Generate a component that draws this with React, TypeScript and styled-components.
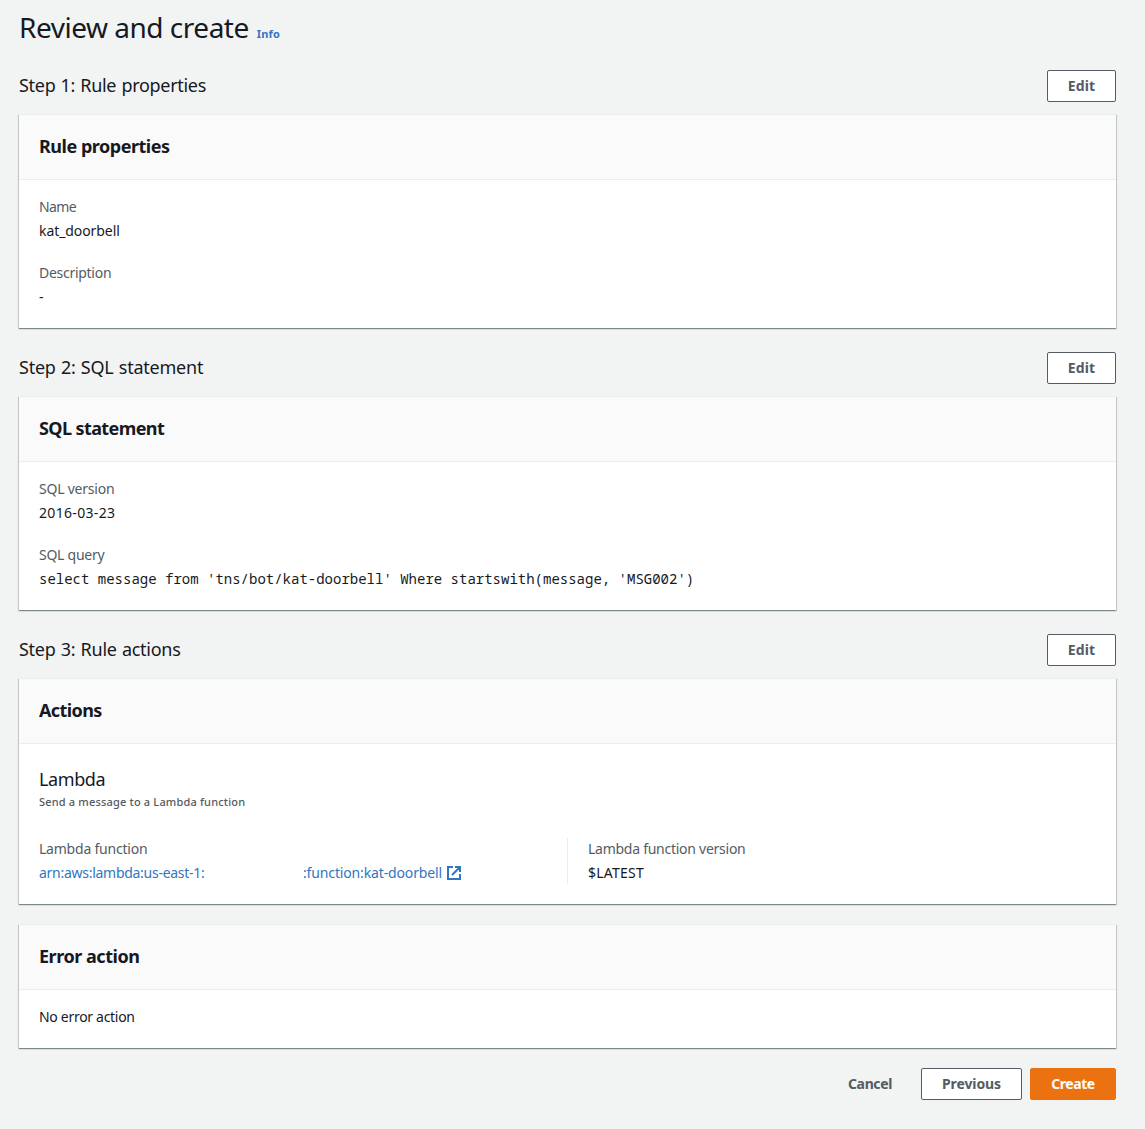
import React from "react";
import styled, { createGlobalStyle } from "styled-components";

const colors = {
  page: "#f2f3f3",
  text: "#16191f",
  muted: "#545b64",
  link: "#3176c0",
  border: "#eaeded",
  accent: "#ec7211",
};

const GlobalStyle = createGlobalStyle`
  *, *::before, *::after { box-sizing: border-box; }
  body {
    margin: 0;
    background: ${colors.page};
    color: ${colors.text};
    font-family: "Noto Sans", "Open Sans", sans-serif;
    font-size: 14px;
    line-height: 22px;
  }
`;

type Tracked = { $track?: number };
const tracking = ({ $track = 0 }: Tracked) => `${$track}px`;

const Page = styled.main`
  display: flex;
  flex-direction: column;
  min-height: 1129px;
  padding: 9px 29px 29px 19px;
`;

const PageHeader = styled.header`
  display: flex;
  align-items: baseline;
  gap: 8px;
  height: 36px;
  margin-bottom: 25px;
`;

const PageTitle = styled.h1`
  margin: 0;
  font-size: 28px;
  line-height: 36px;
  font-weight: 400;
  letter-spacing: -0.48px;
`;

const InfoLink = styled.a`
  color: ${colors.link};
  font-size: 11px;
  line-height: 16px;
  font-weight: 700;
  letter-spacing: 0.15px;
`;

const Step = styled.section`
  display: flex;
  flex-direction: column;
  margin-bottom: 24px;
`;

const FinalStep = styled(Step)`
  margin-bottom: 20px;
`;

const StepHeader = styled.div`
  display: flex;
  align-items: center;
  justify-content: space-between;
  margin-bottom: 12px;
`;

const StepTitle = styled.h2<Tracked>`
  margin: 0 0 2px;
  font-size: 18px;
  line-height: 22px;
  font-weight: 400;
  letter-spacing: ${tracking};
  word-spacing: 0.8px;
`;

const Button = styled.button<Tracked & { $width: number }>`
  display: flex;
  align-items: center;
  justify-content: center;
  width: ${({ $width }) => $width}px;
  height: 32px;
  padding: 0;
  border: 1px solid ${colors.muted};
  border-radius: 2px;
  background: #fff;
  color: ${colors.muted};
  font: 700 14px/22px "Noto Sans", "Open Sans", sans-serif;
  letter-spacing: ${tracking};
`;

const PrimaryButton = styled(Button)`
  border-color: ${colors.accent};
  background: ${colors.accent};
  color: #fff;
`;

const PlainButton = styled(Button)`
  border-color: transparent;
  background: transparent;
`;

const CardStack = styled.div`
  display: flex;
  flex-direction: column;
  gap: 20px;
`;

const Card = styled.div`
  border-top: 1px solid ${colors.border};
  background: #fff;
  box-shadow:
    0 1px 1px 0 rgba(0, 28, 36, 0.3),
    1px 1px 1px 0 rgba(0, 28, 36, 0.15),
    -1px 1px 1px 0 rgba(0, 28, 36, 0.15);
`;

const CardHeader = styled.div`
  display: flex;
  align-items: center;
  height: 65px;
  padding: 0 20px 2px;
  border-bottom: 1px solid ${colors.border};
  background: #fafafa;
`;

const CardTitle = styled.h3<Tracked>`
  margin: 0;
  font-size: 18px;
  line-height: 22px;
  font-weight: 700;
  letter-spacing: ${tracking};
`;

const CardBody = styled.div`
  display: flex;
  flex-direction: column;
  gap: 20px;
  padding: 16px 20px 20px;
`;

const ActionBody = styled(CardBody)`
  gap: 28px;
  padding-top: 24px;
`;

const ActionTitle = styled(StepTitle)`
  margin-bottom: 4px;
`;

const ActionHint = styled.p`
  margin: 0;
  color: ${colors.muted};
  font-size: 11px;
  line-height: 16px;
  font-weight: 500;
  letter-spacing: 0.18px;
`;

const Columns = styled.div`
  display: grid;
  grid-template-columns: 528px 1fr;
`;

const Column = styled.div`
  & + & {
    padding-left: 20px;
    border-left: 1px solid ${colors.border};
  }
`;

const Pair = styled.div`
  display: flex;
  flex-direction: column;
  gap: 2px;
`;

const Label = styled.div<Tracked>`
  color: ${colors.muted};
  letter-spacing: ${tracking};
`;

const Value = styled.div<Tracked>`
  letter-spacing: ${tracking};
`;

const Query = styled.code`
  font: 14px/22px "Noto Sans Mono", "DejaVu Sans Mono", monospace;
`;

const ArnLink = styled.a`
  display: flex;
  align-items: center;
  color: ${colors.link};
`;

const ArnPrefix = styled.span`
  width: 264px;
  letter-spacing: -0.276px;
`;

const ArnSuffix = styled.span`
  letter-spacing: -0.14px;
`;

const ExternalIcon = styled.svg`
  width: 16px;
  height: 16px;
  margin-left: 4px;
`;

const Footer = styled.footer`
  display: flex;
  justify-content: flex-end;
  gap: 8px;
`;

function Field({ label, track, children }: { label: string; track: number; children: React.ReactNode }) {
  return (
    <Pair>
      <Label $track={track}>{label}</Label>
      {children}
    </Pair>
  );
}

function StepBar({ title, track }: { title: string; track: number }) {
  return (
    <StepHeader>
      <StepTitle $track={track}>{title}</StepTitle>
      <Button $width={69} $track={0.14}>Edit</Button>
    </StepHeader>
  );
}

export default function App() {
  return (
    <>
      <GlobalStyle />
      <Page>
        <PageHeader>
          <PageTitle>Review and create</PageTitle>
          <InfoLink>Info</InfoLink>
        </PageHeader>

        <Step>
          <StepBar title="Step 1: Rule properties" track={-0.3} />
          <Card>
            <CardHeader>
              <CardTitle $track={-0.48}>Rule properties</CardTitle>
            </CardHeader>
            <CardBody>
              <Field label="Name" track={-0.6}>
                <Value $track={-0.08}>kat_doorbell</Value>
              </Field>
              <Field label="Description" track={-0.28}>
                <Value>-</Value>
              </Field>
            </CardBody>
          </Card>
        </Step>

        <Step>
          <StepBar title="Step 2: SQL statement" track={-0.23} />
          <Card>
            <CardHeader>
              <CardTitle $track={-0.6}>SQL statement</CardTitle>
            </CardHeader>
            <CardBody>
              <Field label="SQL version" track={-0.22}>
                <Value $track={0.33}>2016-03-23</Value>
              </Field>
              <Field label="SQL query" track={-0.25}>
                <Query>select message from 'tns/bot/kat-doorbell' Where startswith(message, 'MSG002')</Query>
              </Field>
            </CardBody>
          </Card>
        </Step>

        <FinalStep>
          <StepBar title="Step 3: Rule actions" track={-0.26} />
          <CardStack>
            <Card>
              <CardHeader>
                <CardTitle $track={-0.6}>Actions</CardTitle>
              </CardHeader>
              <ActionBody>
                <div>
                  <ActionTitle as="h4" $track={-0.4}>Lambda</ActionTitle>
                  <ActionHint>Send a message to a Lambda function</ActionHint>
                </div>
                <Columns>
                  <Column>
                    <Field label="Lambda function" track={-0.22}>
                      <ArnLink>
                        <ArnPrefix>arn:aws:lambda:us-east-1:</ArnPrefix>
                        <ArnSuffix>:function:kat-doorbell</ArnSuffix>
                        <ExternalIcon viewBox="0 0 16 16" fill="none" stroke="currentColor" strokeWidth="2">
                          <path d="M7 2H2v12h12V9M9 2h5v5M6 10l8-8" />
                        </ExternalIcon>
                      </ArnLink>
                    </Field>
                  </Column>
                  <Column>
                    <Field label="Lambda function version" track={-0.26}>
                      <Value $track={0.22}>$LATEST</Value>
                    </Field>
                  </Column>
                </Columns>
              </ActionBody>
            </Card>
            <Card>
              <CardHeader>
                <CardTitle $track={-0.46}>Error action</CardTitle>
              </CardHeader>
              <CardBody>
                <Value $track={-0.3}>No error action</Value>
              </CardBody>
            </Card>
          </CardStack>
        </FinalStep>

        <Footer>
          <PlainButton $width={86} $track={-0.38}>Cancel</PlainButton>
          <Button $width={101} $track={-0.1}>Previous</Button>
          <PrimaryButton $width={86} $track={-0.43}>Create</PrimaryButton>
        </Footer>
      </Page>
    </>
  );
}
